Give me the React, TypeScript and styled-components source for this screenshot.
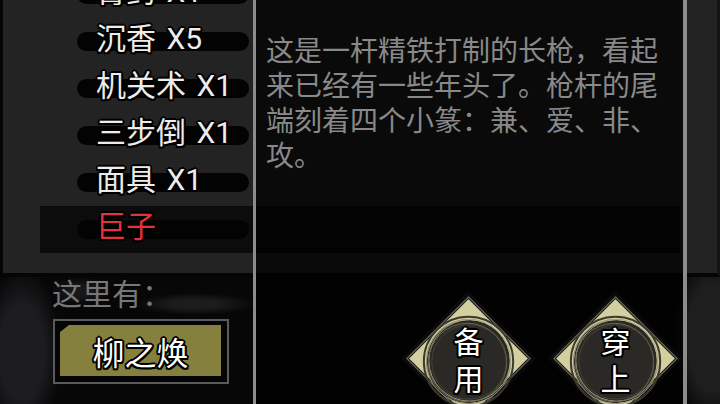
import styled, { createGlobalStyle } from 'styled-components';

const GlobalStyle = createGlobalStyle`
  html, body {
    margin: 0;
    padding: 0;
    background: #070707;
  }
  body {
    font-family: "Noto Sans CJK SC", "Noto Sans", sans-serif;
  }
`;

const inkOutline = `
  text-shadow: -2px 0 #000, 2px 0 #000, 0 -2px #000, 0 2px #000,
    -1.5px -1.5px #000, 1.5px -1.5px #000, -1.5px 1.5px #000, 1.5px 1.5px #000;
`;

const Screen = styled.div`
  position: relative;
  width: 720px;
  height: 404px;
  overflow: hidden;
  display: flex;
  flex-direction: column;
`;

const Bag = styled.div`
  flex: none;
  height: 273px;
  background: #232323;
  border-left: 3px solid #050505;
  border-right: 3px solid #141414;
  border-bottom: 4px solid #050505;
  overflow: hidden;
`;

const ItemList = styled.ul`
  list-style: none;
  margin: -29px 0 0;
  padding: 0 0 0 37px;
  width: 640px;
`;

const Item = styled.li<{ $active?: boolean }>`
  position: relative;
  height: 47px;
  display: flex;
  align-items: center;
  padding-left: 56px;
  font-family: Roboto, "Noto Sans CJK SC", sans-serif;
  font-size: 30px;
  line-height: 1;
  word-spacing: 3px;
  color: ${p => (p.$active ? '#e2323e' : '#ececec')};
  background: ${p => (p.$active ? '#0c0c0c' : 'transparent')};
  ${inkOutline}

  &::before {
    content: '';
    position: absolute;
    left: 37px;
    top: 50%;
    width: 172px;
    height: 19px;
    margin-top: -10px;
    border-radius: 10px;
    background: #030303;
  }

  span {
    position: relative;
    top: -3px;
  }
`;

const Scene = styled.div`
  flex: 1;
  display: flex;
  flex-direction: column;
  align-items: flex-start;
  gap: 12px;
  padding-left: 52px;
  background:
    radial-gradient(ellipse 40px 85px at 22px 75px, #1d1d21 55%, transparent 100%),
    radial-gradient(ellipse 60px 11px at 195px 27px, #1c1c1c 40%, transparent 100%),
    radial-gradient(ellipse 30px 14px at 80px 14px, #17171a 40%, transparent 100%),
    radial-gradient(ellipse 40px 90px at 712px 60px, #1e1e1e 60%, transparent 100%),
    #070707;
`;

const HereLabel = styled.div`
  font-size: 30px;
  line-height: 30px;
  color: #777777;
`;

const NpcButton = styled.button`
  box-sizing: border-box;
  width: 176px;
  height: 65px;
  margin-left: 1px;
  padding: 4px 6px 6px 5px;
  border: 2px solid #5b5b5b;
  background: #050505;
  display: flex;
  cursor: pointer;
`;

const NpcFace = styled.span`
  flex: 1;
  display: flex;
  align-items: center;
  justify-content: center;
  background: #86803f;
  clip-path: polygon(9px 0, 100% 0, 100% 100%, 0 100%, 0 7px);
  font-family: "Noto Sans CJK SC", sans-serif;
  font-size: 32px;
  line-height: 1;
  color: #ffffff;
  ${inkOutline}
`;

const Detail = styled.section`
  position: absolute;
  left: 253px;
  top: 0;
  width: 427px;
  height: 404px;
  border-left: 3px solid #8c8c8c;
  border-right: 4px solid #8c8c8c;
  background: rgba(0, 0, 0, 0.7);
  display: flex;
  flex-direction: column;
  overflow: hidden;
`;

const Description = styled.p`
  flex: none;
  box-sizing: border-box;
  height: 292px;
  margin: 0;
  padding: 32px 20px 0 10px;
  font-size: 28px;
  line-height: 35px;
  color: #898989;
`;

const Actions = styled.div`
  display: flex;
  justify-content: flex-end;
  gap: 14px;
  padding-right: 1px;
`;

const Seal = styled.button`
  flex: none;
  width: 133px;
  height: 133px;
  padding: 0;
  border: 0;
  background: none;
  display: grid;
  place-items: center;
  cursor: pointer;

  svg {
    grid-area: 1 / 1;
  }
`;

const SealLabel = styled.span`
  grid-area: 1 / 1;
  position: relative;
  width: 1em;
  font-family: "Noto Sans CJK SC", sans-serif;
  font-size: 30px;
  line-height: 37px;
  text-align: center;
  word-break: break-all;
  color: #ffffff;
  ${inkOutline}
`;

function SealShape() {
  return (
    <svg width="133" height="133" viewBox="0 0 134 134">
      <polygon points="67,3 131,67 67,131 3,67" fill="#d3cf9f" stroke="#0a0a0a" strokeWidth="6" strokeLinejoin="round" />
      <polygon points="67,5 129,67 67,129 5,67" fill="none" stroke="#5f5e52" strokeWidth="1.5" strokeLinejoin="round" />
      <circle cx="67" cy="70" r="45" fill="none" stroke="#3b3a31" strokeWidth="2" />
      <circle cx="67" cy="70" r="42" fill="#2a2926" />
      <circle cx="67" cy="70" r="42.5" fill="none" stroke="#8f8c6c" strokeWidth="1" />
      <circle cx="68" cy="69" r="41" fill="none" stroke="#bdb993" strokeWidth="0.8" />
      <circle cx="66" cy="71" r="39.5" fill="none" stroke="#6a6852" strokeWidth="1" />
      <circle cx="67.5" cy="70.5" r="37.5" fill="none" stroke="#4a493d" strokeWidth="0.8" />
    </svg>
  );
}

const items = [
  { name: '膏药 X1' },
  { name: '沉香 X5' },
  { name: '机关术 X1' },
  { name: '三步倒 X1' },
  { name: '面具 X1' },
  { name: '巨子', active: true },
];

export default function App() {
  return (
    <>
      <GlobalStyle />
      <Screen>
        <Bag>
          <ItemList>
            {items.map(item => (
              <Item key={item.name} $active={item.active}>
                <span>{item.name}</span>
              </Item>
            ))}
          </ItemList>
        </Bag>
        <Scene>
          <HereLabel>这里有：</HereLabel>
          <NpcButton>
            <NpcFace>柳之焕</NpcFace>
          </NpcButton>
        </Scene>
        <Detail>
          <Description>
            这是一杆精铁打制的长枪，看起来已经有一些年头了。枪杆的尾端刻着四个小篆：兼、爱、非、攻。
          </Description>
          <Actions>
            <Seal>
              <SealShape />
              <SealLabel>备用</SealLabel>
            </Seal>
            <Seal>
              <SealShape />
              <SealLabel>穿上</SealLabel>
            </Seal>
          </Actions>
        </Detail>
      </Screen>
    </>
  );
}
